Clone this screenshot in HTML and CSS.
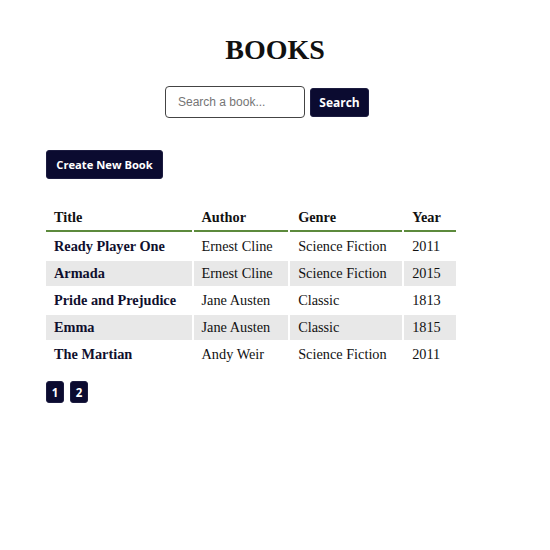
FILE: index.html
```html
<!DOCTYPE html>
<html>
<head>
<meta charset="utf-8">
<link rel="stylesheet" href="styles.css">
</head>
<body>
<div class="page">
  <h1 class="title">BOOKS</h1>
  <form class="search">
    <input class="search-input" type="text" placeholder="Search a book...">
    <button class="btn btn-search" type="button">Search</button>
  </form>
  <div class="actions">
    <button class="btn btn-create" type="button">Create New Book</button>
  </div>
  <table class="books">
    <thead>
      <tr><th>Title</th><th>Author</th><th>Genre</th><th>Year</th></tr>
    </thead>
    <tbody>
      <tr><td class="book-title">Ready Player One</td><td>Ernest Cline</td><td>Science Fiction</td><td>2011</td></tr>
      <tr><td class="book-title">Armada</td><td>Ernest Cline</td><td>Science Fiction</td><td>2015</td></tr>
      <tr><td class="book-title">Pride and Prejudice</td><td>Jane Austen</td><td>Classic</td><td>1813</td></tr>
      <tr><td class="book-title">Emma</td><td>Jane Austen</td><td>Classic</td><td>1815</td></tr>
      <tr><td class="book-title">The Martian</td><td>Andy Weir</td><td>Science Fiction</td><td>2011</td></tr>
    </tbody>
  </table>
  <div class="pagination">
    <button class="btn btn-page" type="button">1</button>
    <button class="btn btn-page" type="button">2</button>
  </div>
</div>
</body>
</html>
```
FILE: styles.css
```css
html, body {
  margin: 0;
  padding: 0;
  background: #ffffff;
}
body {
  font-family: "Liberation Serif", "Times New Roman", serif;
  color: #111;
}
.page {
  padding: 34px 46px 0 46px;
}
.title {
  margin: 0;
  text-align: center;
  font-size: 28px;
  line-height: 32px;
  font-weight: bold;
  color: #111;
}
.search {
  margin: 20px 16px 0 0;
  display: flex;
  justify-content: center;
  align-items: center;
  gap: 5px;
}
.search-input {
  box-sizing: border-box;
  width: 140px;
  height: 32px;
  border: 1px solid #444;
  border-radius: 4px;
  padding: 0 12px;
  font-family: "Liberation Sans", Arial, sans-serif;
  font-size: 12px;
  color: #222;
  background: #fff;
  outline: none;
}
.search-input::placeholder {
  color: #757575;
}
.btn {
  box-sizing: border-box;
  background: #0b0b30;
  color: #fff;
  border: 1px solid #1c1c40;
  border-radius: 3px;
  font-family: "Open Sans", "Noto Sans", sans-serif;
  font-weight: bold;
  font-size: 12px;
  cursor: pointer;
  padding: 0;
}
.btn-search {
  width: 59px;
  height: 29px;
}
.actions {
  margin-top: 32px;
  display: flex;
}
.btn-create {
  width: 117px;
  height: 29px;
  font-size: 11.2px;
}
.books {
  margin: 23px 0 0 -2px;
  border-collapse: separate;
  border-spacing: 2px;
  font-size: 14.3px;
}
.books th,
.books td {
  text-align: left;
  padding: 4px 15.5px 4px 8px;
  line-height: 17px;
}
.books th {
  font-weight: bold;
  padding-top: 5px;
  padding-bottom: 4px;
  border-bottom: 2px solid #5c8a3c;
}
.books tbody tr:nth-child(even) td {
  background: #e8e8e8;
}
.book-title {
  font-weight: bold;
  color: #10102e;
}
.pagination {
  margin-top: 12px;
  display: flex;
  gap: 6px;
}
.btn-page {
  width: 18px;
  height: 22px;
  font-size: 11.5px;
}
```
